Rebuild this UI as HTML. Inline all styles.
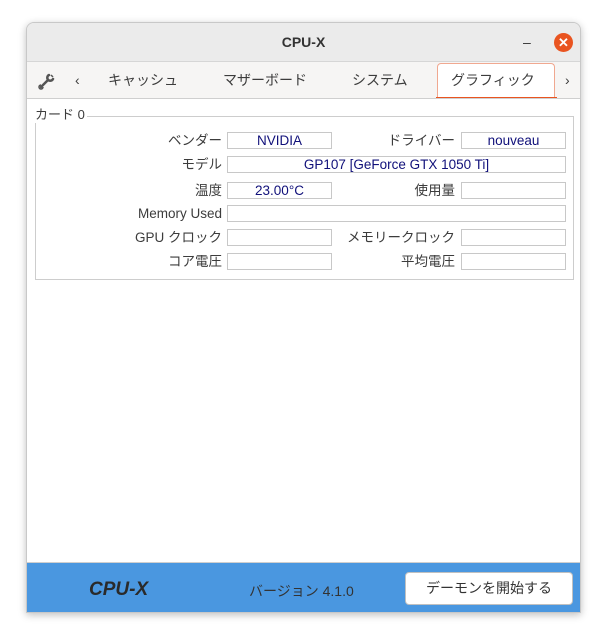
<!DOCTYPE html>
<html><head><meta charset="utf-8"><style>
*{margin:0;padding:0;box-sizing:border-box}
body{width:607px;height:642px;background:#fff;position:relative;font-family:"Liberation Sans","Noto Sans CJK JP",sans-serif;font-size:14px;color:#3c3c3c;overflow:hidden}
.win{position:absolute;left:26px;top:22px;width:555px;height:591px;background:#f6f5f4;border:1px solid #c8c8c8;border-radius:8px 8px 0 0;box-shadow:0 2px 8px rgba(0,0,0,.25);overflow:hidden}
.title{position:absolute;left:0;top:0;width:100%;height:39px;background:#ebebeb;border-bottom:1px solid #d6d6d6;text-align:center;line-height:38px;font-weight:bold;font-size:14px;color:#333}
.min{position:absolute;left:496px;top:0;font-weight:normal}
.close{position:absolute;left:527px;top:10px;width:19px;height:19px;border-radius:50%;background:#e95420;color:#fff;font-size:13px;line-height:19px;text-align:center;font-weight:bold}
.tabs{position:absolute;left:0;top:39px;width:100%;height:37px}
.tab{position:absolute;top:0;height:37px;line-height:37px;font-size:14px;color:#3c3c3c}
.act{position:absolute;left:410px;top:1px;width:118px;height:34px;border:1px solid #f0a890;border-bottom:none;border-radius:4px 4px 0 0;background:#fff}
.ul{position:absolute;left:409px;top:35px;width:121px;height:2px;background:#e95420}
.content{position:absolute;left:0;top:75px;width:555px;height:465px;background:#fff;border-top:1px solid #cfcfcf;border-bottom:1px solid #cfcfcf}
.grp{position:absolute;left:8px;top:17px;width:539px;height:164px;border:1px solid #cdcdcd}
.gl{position:absolute;left:8px;top:8px;background:#fff;padding-right:2px;font-size:13px;line-height:16px}
.l{position:absolute;font-size:13.5px;text-align:right;line-height:17px}
.f{position:absolute;height:17px;border:1px solid #c8c8c8;background:#fff;color:#10107a;font-size:13.5px;line-height:15px;text-align:center}
.foot{position:absolute;left:0;top:540px;width:555px;height:51px;background:#4a97e0}
.btn{position:absolute;left:378px;top:9px;width:168px;height:33px;background:#fff;border:1px solid #c0c0c0;border-radius:4px;text-align:center;line-height:31px;font-size:14px;color:#333}
</style></head><body>
<div class="win">
<div class="title">CPU-X<span class="min">–</span><div class="close">✕</div></div>
<div class="tabs">
<svg style="position:absolute;left:11px;top:10px" width="18" height="18" viewBox="0 0 18 18"><path d="M3 15 L10 8 M11 3a3 3 0 1 0 4 4" stroke="#555" stroke-width="2.5" fill="none" stroke-linecap="round"/><path d="M5 15a2 2 0 1 1-2-2M13 3l2 2" stroke="#555" stroke-width="1.5" fill="none"/></svg>
<div class="tab" style="left:48px">‹</div>
<div class="tab" style="left:81px">キャッシュ</div>
<div class="tab" style="left:196px">マザーボード</div>
<div class="tab" style="left:325px">システム</div>
<div class="act"></div><div class="ul"></div>
<div class="tab" style="left:424px">グラフィック</div>
<div class="tab" style="left:538px">›</div>
</div>
<div class="content">
<div class="grp"></div>
<div class="gl">カード 0</div>
<div class="l" style="right:360px;top:33px">ベンダー</div><div class="f" style="left:200px;top:33px;width:105px">NVIDIA</div>
<div class="l" style="right:127px;top:33px">ドライバー</div><div class="f" style="left:434px;top:33px;width:105px">nouveau</div>
<div class="l" style="right:360px;top:57px">モデル</div><div class="f" style="left:200px;top:57px;width:339px">GP107 [GeForce GTX 1050 Ti]</div>
<div class="l" style="right:360px;top:83px">温度</div><div class="f" style="left:200px;top:83px;width:105px">23.00°C</div>
<div class="l" style="right:127px;top:83px">使用量</div><div class="f" style="left:434px;top:83px;width:105px"></div>
<div class="l" style="right:360px;top:106px">Memory Used</div><div class="f" style="left:200px;top:106px;width:339px"></div>
<div class="l" style="right:360px;top:130px">GPU クロック</div><div class="f" style="left:200px;top:130px;width:105px"></div>
<div class="l" style="right:127px;top:130px">メモリークロック</div><div class="f" style="left:434px;top:130px;width:105px"></div>
<div class="l" style="right:360px;top:154px">コア電圧</div><div class="f" style="left:200px;top:154px;width:105px"></div>
<div class="l" style="right:127px;top:154px">平均電圧</div><div class="f" style="left:434px;top:154px;width:105px"></div>
</div>
<div class="foot">
<div style="position:absolute;left:62px;top:16px;font-weight:bold;font-style:italic;font-size:19px;color:#2a2a2a">CPU-X</div>
<div style="position:absolute;left:222px;top:18px;font-size:14px;color:#333">バージョン 4.1.0</div>
<div class="btn">デーモンを開始する</div>
</div>
</div>
</body></html>
